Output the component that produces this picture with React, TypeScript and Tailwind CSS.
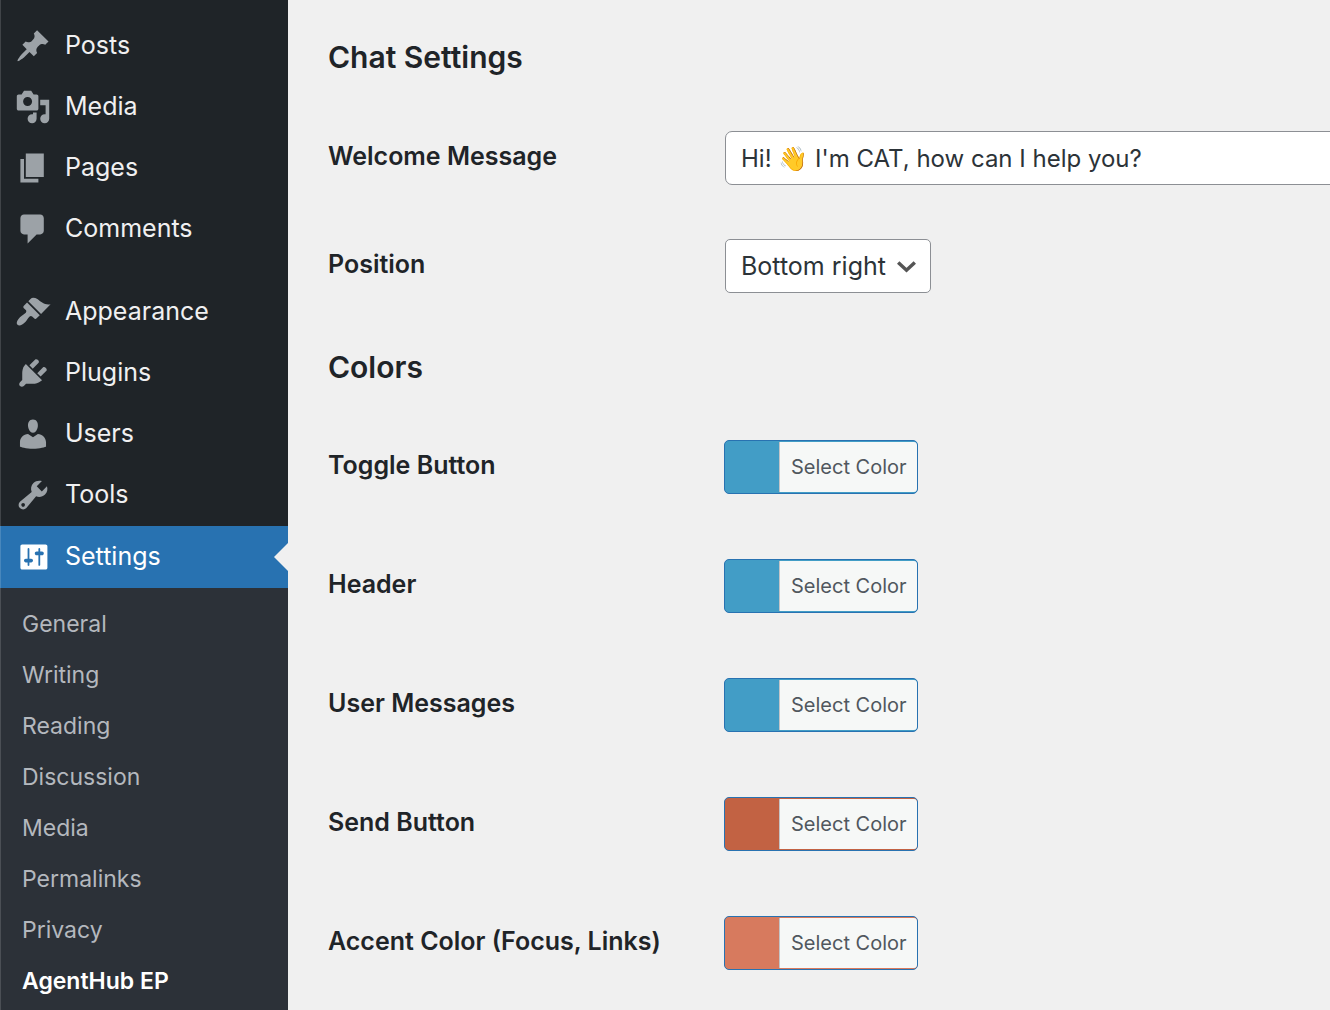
import { useState } from "react";

interface MenuItem {
  label: string;
  icon: string;
}

interface ColorField {
  id: string;
  label: string;
  color: string;
}

const contentMenu: MenuItem[] = [
  {
    label: "Posts",
    icon: "M10.44 3.02l1.82-1.82 6.36 6.35-1.83 1.82c-1.05-.68-2.48-.57-3.41.36l-.75.75c-.92.93-1.04 2.35-.35 3.41l-1.83 1.82-2.41-2.41-2.8 2.79c-.42.42-3.38 2.71-3.8 2.29s1.86-3.39 2.28-3.81l2.79-2.79L4.1 9.36l1.83-1.82c1.05.69 2.48.57 3.4-.36l.75-.75c.93-.92 1.05-2.35.36-3.41z",
  },
  {
    label: "Media",
    icon: "M13 11V4c0-.55-.45-1-1-1h-1.67L9 1H5L3.67 3H2c-.55 0-1 .45-1 1v7c0 .55.45 1 1 1h10c.55 0 1-.45 1-1zM7 4.5c1.38 0 2.5 1.12 2.5 2.5S8.38 9.5 7 9.5 4.5 8.38 4.5 7 5.62 4.5 7 4.5zM14 6h5v10.5c0 1.38-1.12 2.5-2.5 2.5S14 17.88 14 16.5s1.12-2.5 2.5-2.5c.17 0 .34.02.5.05V9h-3V6zm-4 8.05V13h2v3.5c0 1.38-1.12 2.5-2.5 2.5S7 17.88 7 16.5 8.12 14 9.5 14c.17 0 .34.02.5.05z",
  },
  { label: "Pages", icon: "M6 15V2h10v13H6zm-1 1h8v2H3V5h2v11z" },
  {
    label: "Comments",
    icon: "M5 2h9c1.1 0 2 .9 2 2v7c0 1.1-.9 2-2 2h-2l-5 5v-5H5c-1.1 0-2-.9-2-2V4c0-1.1.9-2 2-2z",
  },
];

const adminMenu: MenuItem[] = [
  {
    label: "Appearance",
    icon: "M14.48 11.06L7.41 3.99l1.5-1.5c.5-.56 2.3-.47 3.51.32 1.21.8 1.43 1.28 2.91 2.1 1.18.64 2.45 1.26 4.45.85zm-.71.71L6.7 4.7 4.93 6.47c-.39.39-.39 1.02 0 1.41l1.06 1.06c.39.39.39 1.03 0 1.42-.6.6-1.43 1.11-2.21 1.69-.35.26-.7.53-1.01.84C1.43 14.23.4 16.08 1.4 17.07c.99 1 2.84-.03 4.18-1.36.31-.31.58-.66.85-1.02.57-.78 1.08-1.61 1.69-2.21.39-.39 1.02-.39 1.41 0l1.06 1.06c.39.39 1.02.39 1.41 0z",
  },
  {
    label: "Plugins",
    icon: "M13.11 4.36L9.87 7.6 8 5.73l3.24-3.24c.35-.34 1.05-.2 1.56.32.52.51.66 1.21.31 1.55zm-8 1.77l.91-1.12 9.01 9.01-1.19.84c-.71.71-2.63 1.16-3.82 1.16H6.14L4.9 17.26c-.59.59-1.54.59-2.12 0-.59-.58-.59-1.53 0-2.12l1.24-1.24v-3.88c0-1.13.4-3.19 1.09-3.89zm7.26 3.97l3.24-3.24c.34-.35 1.04-.21 1.55.31.52.51.66 1.21.31 1.55l-3.24 3.25z",
  },
  {
    label: "Users",
    icon: "M10 9.25c-2.27 0-2.73-3.44-2.73-3.44C7 4.02 7.82 2 9.97 2c2.16 0 2.98 2.02 2.71 3.81 0 0-.41 3.44-2.68 3.44zm0 2.57L12.72 10c2.39 0 4.52 2.33 4.52 4.53v2.49s-3.65 1.13-7.24 1.13c-3.65 0-7.24-1.13-7.24-1.13v-2.49c0-2.25 1.94-4.48 4.47-4.48z",
  },
  {
    label: "Tools",
    icon: "M16.68 9.77c-1.34 1.34-3.3 1.67-4.95.99l-5.41 6.52c-.99.99-2.59.99-3.58 0s-.99-2.59 0-3.57l6.52-5.42c-.68-1.65-.35-3.61.99-4.95 1.28-1.28 3.12-1.62 4.72-1.06l-2.89 2.89 2.82 2.82 2.86-2.87c.53 1.58.18 3.39-1.08 4.65zM3.81 16.21c.4.39 1.04.39 1.43 0 .4-.4.4-1.04 0-1.43-.39-.4-1.03-.4-1.43 0-.39.39-.39 1.03 0 1.43z",
  },
];

const settingsIcon =
  "M18 16V4c0-.55-.45-1-1-1H4c-.55 0-1 .45-1 1v12c0 .55.45 1 1 1h13c.55 0 1-.45 1-1zM8 11h1c.55 0 1 .45 1 1s-.45 1-1 1H8v1.5c0 .28-.22.5-.5.5s-.5-.22-.5-.5V13H6c-.55 0-1-.45-1-1s.45-1 1-1h1V5.5c0-.28.22-.5.5-.5s.5.22.5.5V11zm5-2h-1c-.55 0-1-.45-1-1s.45-1 1-1h1V5.5c0-.28.22-.5.5-.5s.5.22.5.5V7h1c.55 0 1 .45 1 1s-.45 1-1 1h-1v5.5c0 .28-.22.5-.5.5s-.5-.22-.5-.5V9z";

const settingsPages = [
  "General",
  "Writing",
  "Reading",
  "Discussion",
  "Media",
  "Permalinks",
  "Privacy",
  "AgentHub EP",
];

const colorFields: ColorField[] = [
  { id: "toggle-button", label: "Toggle Button", color: "#429dc6" },
  { id: "header", label: "Header", color: "#429dc6" },
  { id: "user-messages", label: "User Messages", color: "#429dc6" },
  { id: "send-button", label: "Send Button", color: "#c26243" },
  { id: "accent", label: "Accent Color (Focus, Links)", color: "#d77a5e" },
];

function MenuIcon({ path }: { path: string }) {
  return (
    <svg className="h-9 w-9 shrink-0" viewBox="0 0 20 20" fill="currentColor" aria-hidden="true">
      <path d={path} />
    </svg>
  );
}

function MenuLink({ item }: { item: MenuItem }) {
  return (
    <li>
      <a href="#" className="flex h-[61px] items-center gap-[14px] pl-[14px] text-[#9ca2a7]">
        <MenuIcon path={item.icon} />
        <span className="text-[#f0f0f1]">{item.label}</span>
      </a>
    </li>
  );
}

function Sidebar() {
  return (
    <nav className="flex w-72 shrink-0 flex-col bg-[#1f2428] text-[25px]">
      <div className="border-l border-white/15 pt-[15px] pb-px">
        <ul>
          {contentMenu.map((item) => (
            <MenuLink key={item.label} item={item} />
          ))}
        </ul>
        <ul className="mt-[22px]">
          {adminMenu.map((item) => (
            <MenuLink key={item.label} item={item} />
          ))}
        </ul>
      </div>
      <a
        href="#"
        className="relative flex h-[62px] items-center gap-[14px] border-l border-white/15 bg-[#2872b1] pl-[14px] text-white"
      >
        <MenuIcon path={settingsIcon} />
        <span>Settings</span>
        {/* notch pointing at the open page */}
        <span className="absolute top-1/2 right-0 -mt-[14px] border-y-[14px] border-r-[14px] border-y-transparent border-r-[#f0f0f0]" />
      </a>
      <ul className="flex-1 border-l border-white/15 bg-[#2c3138] pt-[11px] text-[23px]">
        {settingsPages.map((page) => (
          <li key={page}>
            <a
              href="#"
              className={
                page === "AgentHub EP"
                  ? "flex h-[51px] items-center pl-[21px] font-semibold text-white"
                  : "flex h-[51px] items-center pl-[21px] text-[#b4b8be]"
              }
            >
              {page}
            </a>
          </li>
        ))}
      </ul>
    </nav>
  );
}

function ColorRow({ field }: { field: ColorField }) {
  return (
    <div className="flex items-center">
      <label htmlFor={field.id} className="w-[396px] shrink-0 pb-0.5 font-semibold">
        {field.label}
      </label>
      <button
        id={field.id}
        type="button"
        className="flex h-[54px] overflow-hidden rounded-[5px] border border-[#2872b1] py-px pl-[54px] text-xl text-[#50575e]"
        style={{ backgroundColor: field.color }}
      >
        <span className="flex h-full items-center rounded-r-[3px] border-l border-[#c3c4c7] bg-[#f6f8f7] pr-[10px] pl-[11px]">
          Select Color
        </span>
      </button>
    </div>
  );
}

export default function App() {
  const [message, setMessage] = useState("Hi! 👋 I'm CAT, how can I help you?");
  const [position, setPosition] = useState("Bottom right");

  return (
    <div className="flex min-h-screen bg-[#f0f0f0] font-['Inter','Noto_Sans',sans-serif] text-[#1f2428]">
      <Sidebar />
      <main className="min-w-0 flex-1 overflow-hidden px-10 pt-9 pb-10 text-[25px]">
        <h2 className="text-[30px] leading-[42px] font-semibold">Chat Settings</h2>
        <div className="mt-[53px] flex items-center">
          <label htmlFor="welcome" className="w-[397px] shrink-0 pb-0.5 font-semibold">
            Welcome Message
          </label>
          <input
            id="welcome"
            type="text"
            value={message}
            onChange={(e) => setMessage(e.target.value)}
            className="h-[54px] w-[720px] shrink-0 rounded-[7px] border border-[#8c8f94] bg-white px-[15px] text-2xl text-[#2c3338]"
          />
        </div>
        <div className="mt-[54px] flex items-center">
          <label htmlFor="position" className="w-[397px] shrink-0 pb-0.5 font-semibold">
            Position
          </label>
          <div className="relative">
            <select
              id="position"
              value={position}
              onChange={(e) => setPosition(e.target.value)}
              className="h-[54px] appearance-none rounded-[5px] border border-[#8c8f94] bg-white pt-0.5 pr-11 pl-[15px] text-[#2c3338]"
            >
              <option>Bottom right</option>
              <option>Bottom left</option>
            </select>
            <svg
              className="pointer-events-none absolute top-[21px] right-[14px] h-[14px] w-5"
              viewBox="0 0 20 14"
              fill="none"
              stroke="#555"
              strokeWidth="3.5"
              aria-hidden="true"
            >
              <path d="M1.2 2.5l8.3 7.7 8.3-7.7" />
            </svg>
          </div>
        </div>
        <h2 className="mt-[53px] text-[30px] leading-[42px] font-semibold">Colors</h2>
        <div className="mt-[52px] flex flex-col gap-[65px]">
          {colorFields.map((field) => (
            <ColorRow key={field.id} field={field} />
          ))}
        </div>
      </main>
    </div>
  );
}
